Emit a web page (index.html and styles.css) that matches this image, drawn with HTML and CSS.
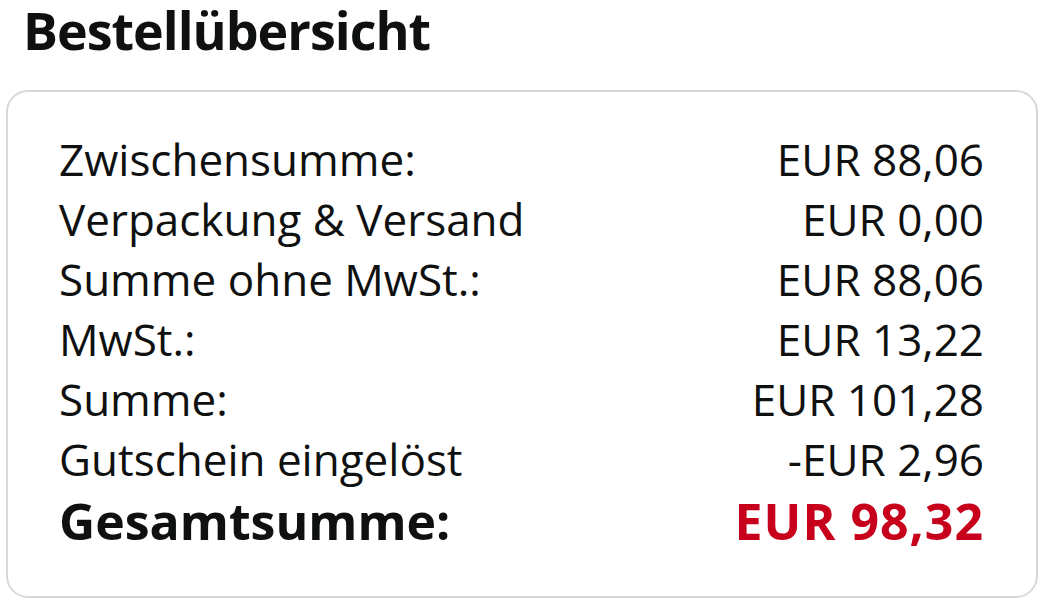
FILE: index.html
```html
<!DOCTYPE html>
<html lang="de">
<head>
<meta charset="utf-8">
<title>Bestellübersicht</title>
<link rel="stylesheet" href="styles.css">
</head>
<body>
<main class="page">
  <h1 class="title">Bestellübersicht</h1>
  <section class="card">
    <div class="row"><span class="label">Zwischensumme:</span><span class="value">EUR 88,06</span></div>
    <div class="row"><span class="label">Verpackung &amp; Versand</span><span class="value">EUR 0,00</span></div>
    <div class="row"><span class="label">Summe ohne MwSt.:</span><span class="value">EUR 88,06</span></div>
    <div class="row"><span class="label">MwSt.:</span><span class="value">EUR 13,22</span></div>
    <div class="row"><span class="label">Summe:</span><span class="value">EUR 101,28</span></div>
    <div class="row"><span class="label">Gutschein eingelöst</span><span class="value">-EUR 2,96</span></div>
    <div class="row total"><span class="label">Gesamtsumme:</span><span class="value">EUR 98,32</span></div>
  </section>
</main>
</body>
</html>
```
FILE: styles.css
```css
html, body {
  margin: 0;
  padding: 0;
  background: #ffffff;
}
body {
  font-family: "Open Sans", "Noto Sans", sans-serif;
  color: #0f1111;
}
.page {
  width: 1043px;
  height: 602px;
  overflow: hidden;
  padding: 0 5px 0 6px;
  box-sizing: border-box;
}
.title {
  margin: 0 0 0 17px;
  font-size: 52px;
  line-height: 60px;
  font-weight: 700;
  letter-spacing: -1px;
}
.card {
  margin-top: 30px;
  height: 508px;
  box-sizing: border-box;
  border: 2px solid #d5d9d9;
  border-radius: 22px;
  padding: 37px 52px 0 51px;
  display: flex;
  flex-direction: column;
}
.row {
  display: flex;
  justify-content: space-between;
  font-size: 44px;
  line-height: 60px;
}
.total {
  margin-top: 2px;
  font-size: 50px;
  font-weight: 700;
}
.total .value {
  color: #c7001b;
  letter-spacing: 1px;
}
```
